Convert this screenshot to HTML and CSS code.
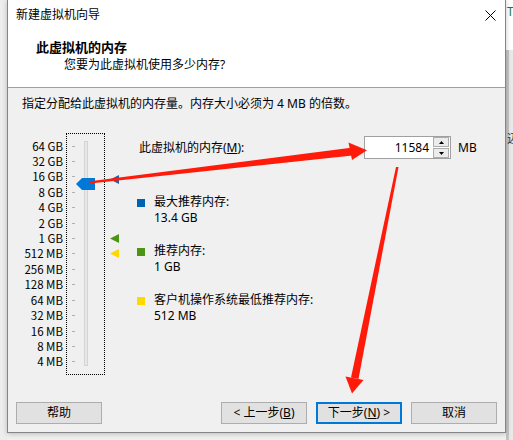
FILE: index.html
```html
<!DOCTYPE html>
<html lang="zh-CN">
<head>
<meta charset="utf-8">
<title>新建虚拟机向导</title>
<link rel="stylesheet" href="styles.css">
</head>
<body>
<div class="screen">
  <div class="bg-left"></div>
  <div class="dialog">
    <div class="titlebar">
      <span class="title">新建虚拟机向导</span>
      <svg class="close" width="11" height="11" viewBox="0 0 11 11"><path d="M0.5 0.5L10.5 10.5M10.5 0.5L0.5 10.5" stroke="#000" stroke-width="1" fill="none"/></svg>
    </div>
    <div class="header">
      <div class="h-title">此虚拟机的内存</div>
      <div class="h-sub">您要为此虚拟机使用多少内存?</div>
    </div>
    <div class="content">
      <p class="intro">指定分配给此虚拟机的内存量。内存大小必须为 4 MB 的倍数。</p>
      <div class="main">
        <div class="scale-labels">
          <span>64 GB</span><span>32 GB</span><span>16 GB</span><span>8 GB</span><span>4 GB</span>
          <span>2 GB</span><span>1 GB</span><span>512 MB</span><span>256 MB</span><span>128 MB</span>
          <span>64 MB</span><span>32 MB</span><span>16 MB</span><span>8 MB</span><span>4 MB</span>
        </div>
        <div class="slider">
          <div class="ticks">
            <i></i><i></i><i></i><i></i><i></i><i></i><i></i><i></i><i></i><i></i><i></i><i></i><i></i><i></i><i></i>
          </div>
          <div class="track">
            <svg class="thumb" style="top:36px" width="19" height="12" viewBox="0 0 19 12"><polygon points="0,6 6,0 19,0 19,12 6,12" fill="#0078d7"/></svg>
          </div>
        </div>
        <div class="markers">
          <svg class="marker" style="top:42px" width="9" height="9" viewBox="0 0 9 9"><polygon points="0,4.5 9,0 9,9" fill="#1f62ad"/></svg>
          <svg class="marker" style="top:101px" width="9" height="9" viewBox="0 0 9 9"><polygon points="0,4.5 9,0 9,9" fill="#4b9414"/></svg>
          <svg class="marker" style="top:116px" width="9" height="9" viewBox="0 0 9 9"><polygon points="0,4.5 9,0 9,9" fill="#ffd800"/></svg>
        </div>
        <div class="panel">
          <div class="mem-row">
            <span class="mem-label">此虚拟机的内存(<u>M</u>):</span>
            <div class="num-input">
              <span class="num-value">11584</span>
              <div class="spin">
                <span class="spin-btn"><svg width="5" height="3" viewBox="0 0 5 3"><polygon points="0,3 2.5,0 5,3" fill="#000"/></svg></span>
                <span class="spin-btn"><svg width="5" height="3" viewBox="0 0 5 3"><polygon points="0,0 5,0 2.5,3" fill="#000"/></svg></span>
              </div>
            </div>
            <span class="unit">MB</span>
          </div>
          <div class="legend">
            <div class="legend-item">
              <span class="swatch sw-blue"></span>
              <div><div>最大推荐内存:</div><div>13.4 GB</div></div>
            </div>
            <div class="legend-item">
              <span class="swatch sw-green"></span>
              <div><div>推荐内存:</div><div>1 GB</div></div>
            </div>
            <div class="legend-item">
              <span class="swatch sw-yellow"></span>
              <div><div>客户机操作系统最低推荐内存:</div><div>512 MB</div></div>
            </div>
          </div>
        </div>
      </div>
    </div>
    <div class="footer">
      <button class="btn btn-help">帮助</button>
      <button class="btn">&lt; 上一步(<u>B</u>)</button>
      <button class="btn btn-default">下一步(<u>N</u>) &gt;</button>
      <button class="btn">取消</button>
    </div>
  </div>
  <div class="bg-right">
    <div class="bg-right-top">T</div>
    <div class="bg-right-rest"><span class="bg-glyph">迈</span></div>
  </div>
  <svg class="annot" width="513" height="440" viewBox="0 0 513 440">
    <polygon points="90,181.2 351,147.8 352.5,155.5 90,183.4" fill="#ff1a0a"/>
    <polygon points="348.5,142.5 367,150.2 352,160" fill="#ff1a0a"/>
    <polygon points="396,167 398.5,167 358.5,379 351,377.5" fill="#ff1a0a"/>
    <polygon points="345.5,376.5 363.5,380 352,393.5" fill="#ff1a0a"/>
  </svg>
</div>
</body>
</html>
```

FILE: styles.css
```css
* { box-sizing: border-box; margin: 0; padding: 0; }
html, body { width: 513px; height: 440px; overflow: hidden; }
body {
  background: #f0f0f0;
  font-family: "Noto Sans", "Noto Sans CJK SC", sans-serif;
  font-size: 12px;
  color: #000;
}
.screen { position: relative; display: flex; width: 513px; height: 440px; }
.bg-left { width: 7px; flex: none; background: #ededed; }
.dialog {
  width: 499px; height: 433px; flex: none;
  display: flex; flex-direction: column;
  background: #f0f0f0;
  border: 1px solid #858585; border-top: none;
  box-shadow: 0 1px 5px rgba(0,0,0,0.22);
  position: relative; z-index: 1;
}
.titlebar {
  height: 30px; background: #fff;
  display: flex; align-items: center; justify-content: space-between;
  padding: 0 9px 0 8px;
}
.title { line-height: 16px; }
.close { display: block; }
.header {
  background: #fff;
  padding: 9px 0 14px 28px;
  border-bottom: 1px solid #a0a0a0;
}
.h-title { font-size: 13px; font-weight: bold; line-height: 17px; }
.h-sub { line-height: 17px; padding-left: 28px; }
.intro { padding: 8px 0 0 14px; line-height: 16px; }
.main { display: flex; margin-top: 21px; }
.scale-labels {
  width: 55px; padding-top: 5.3px;
  display: grid; grid-auto-rows: 15.43px; align-items: center;
  font-family: "Noto Sans CJK SC", sans-serif; font-size: 11.5px;
  text-align: right; line-height: 15px; white-space: nowrap;
}
.slider {
  margin-left: 3px; width: 39px; height: 242px;
  border: 1px dotted #000;
  display: flex; align-items: flex-start;
  padding-left: 5px;
}
.ticks {
  margin-top: 4.3px; width: 3px;
  display: grid; grid-auto-rows: 15.43px; align-items: center;
}
.ticks i { display: block; height: 1px; background: #b0b0b0; }
.track {
  position: relative;
  margin-left: 9px; margin-top: 7px;
  width: 4px; height: 225px;
  background: #e7e7e7; border: 1px solid #d4d4d4;
}
.thumb { position: absolute; left: -9px; display: block; }
.markers { position: relative; width: 32px; flex: none; }
.marker { position: absolute; left: 5px; display: block; }
.panel { flex: 1; padding-top: 3px; }
.mem-row { display: flex; align-items: center; height: 23px; }
.mem-label { width: 227px; padding-left: 2px; line-height: 16px; }
.num-input {
  width: 87px; height: 23px;
  border: 1px solid #a0a0a0; background: #fff;
  display: flex; align-items: center; padding-right: 1px;
}
.num-value { flex: 1; text-align: right; padding-right: 4px; line-height: 21px; }
.spin { display: flex; flex-direction: column; gap: 1px; width: 16px; }
.spin-btn {
  height: 10px; background: #ececec; border: 1px solid #acacac;
  display: flex; align-items: center; justify-content: center;
}
.spin-btn svg { display: block; }
.unit { margin-left: 7px; line-height: 16px; }
.legend { margin-top: 35px; display: flex; flex-direction: column; gap: 17px; }
.legend-item { display: flex; align-items: flex-start; line-height: 16px; }
.swatch { width: 8px; height: 8px; margin: 5px 9px 0 0; flex: none; }
.sw-blue { background: #0063b1; }
.sw-green { background: #4b9414; }
.sw-yellow { background: #ffd800; }
.footer { margin-top: auto; display: flex; gap: 9px; padding: 0 8px 8px; }
.btn {
  width: 86px; height: 22px;
  background: #e1e1e1; border: 1px solid #adadad;
  font-family: inherit; font-size: 12px; color: #000;
  line-height: 18px; text-align: center;
}
.btn-help { margin-right: auto; }
.btn-default { border: 2px solid #0078d7; }
.bg-right { width: 7px; flex: none; display: flex; flex-direction: column; overflow: hidden; }
.bg-right-top {
  height: 50px; background: #fff; color: #1b7a3a;
  padding: 5px 0 0 1px; font-size: 12px; line-height: 14px;
}
.bg-right-rest {
  flex: 1; position: relative;
  background: linear-gradient(to right, #c4c4c4 0 3px, #e8e8e8 3px);
}
.bg-glyph { position: absolute; left: 1px; top: 82px; font-size: 12px; line-height: 14px; color: #333; }
.annot { position: absolute; left: 0; top: 0; z-index: 5; pointer-events: none; }
```
